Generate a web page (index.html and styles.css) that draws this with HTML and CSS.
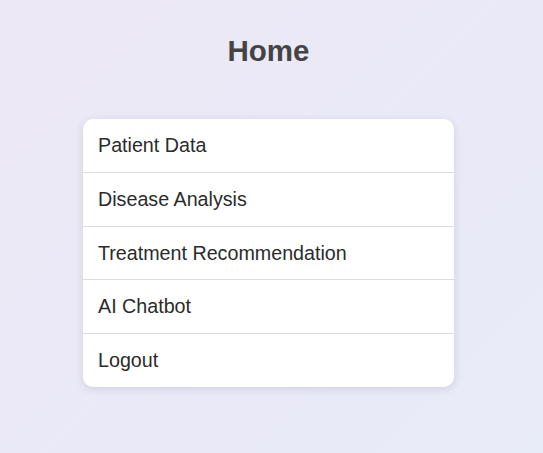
FILE: index.html
```html
<!DOCTYPE html>
<html lang="en">
<head>
<meta charset="utf-8">
<title>Home</title>
<link rel="stylesheet" href="styles.css">
</head>
<body>
<main class="page">
  <h1 class="title">Home</h1>
  <nav class="menu">
    <a class="menu-item" href="#">Patient Data</a>
    <a class="menu-item" href="#">Disease Analysis</a>
    <a class="menu-item" href="#">Treatment Recommendation</a>
    <a class="menu-item" href="#">AI Chatbot</a>
    <a class="menu-item" href="#">Logout</a>
  </nav>
</main>
</body>
</html>
```
FILE: styles.css
```css
html, body {
  margin: 0;
  height: 100%;
}
body {
  background: linear-gradient(135deg, #ede8f6 0%, #e8ebf8 100%);
  font-family: "Liberation Sans", Arial, sans-serif;
  color: #333;
}
.page {
  display: flex;
  flex-direction: column;
  align-items: center;
  padding: 34px 6px 0 0;
}
.title {
  margin: 0;
  font-size: 29.5px;
  line-height: 34px;
  font-weight: bold;
  color: #444;
}
.menu {
  margin-top: 51px;
  width: 371px;
  background: #fff;
  border-radius: 10px;
  box-shadow: 0 2px 8px rgba(60, 60, 90, 0.15);
  display: flex;
  flex-direction: column;
  overflow: hidden;
}
.menu-item {
  display: block;
  padding: 15px 15px;
  font-size: 19.7px;
  line-height: 22.8px;
  color: #2b2b2b;
  text-decoration: none;
  border-bottom: 1px solid #dcdcdc;
}
.menu-item:last-child {
  border-bottom: none;
}
```
